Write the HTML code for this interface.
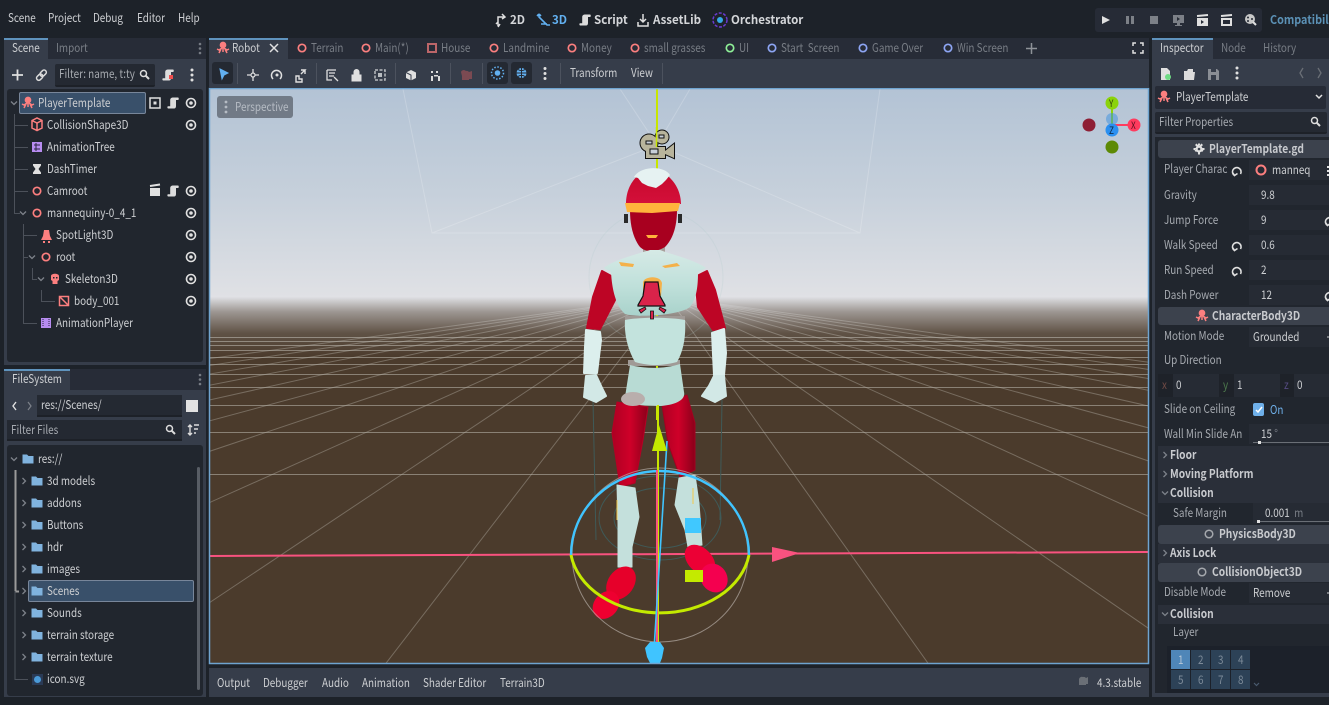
<!DOCTYPE html>
<html><head><meta charset="utf-8"><style>
html,body{margin:0;padding:0;width:1329px;height:705px;overflow:hidden;background:#1d2229}
body{position:relative;font-family:"Noto Sans CJK JP","Liberation Sans",sans-serif;font-size:12px;color:#cdcfd2}
.b{position:absolute}
.t{position:absolute;white-space:nowrap;line-height:16px;transform:scaleX(.825);transform-origin:0 50%}
.d{color:#787d85}
.l{color:#a6aab0}
.h{font-weight:700;color:#d4d6d9;transform:scaleX(.96)}
.s{font-weight:700;color:#c8cace;transform:scaleX(.85)}
svg{position:absolute;left:0;top:0}
</style></head><body>

<svg width="1329" height="705" viewBox="0 0 1329 705">
<defs>
<linearGradient id="sky" x1="0" y1="0" x2="0" y2="1"><stop offset="0" stop-color="#b3c3d5"/><stop offset=".5" stop-color="#c6d0db"/><stop offset="1" stop-color="#e0e1e5"/></linearGradient>
<linearGradient id="fog" x1="0" y1="0" x2="0" y2="1"><stop offset="0" stop-color="#dfe0e4"/><stop offset=".25" stop-color="#dfe0e4" stop-opacity=".55"/><stop offset=".6" stop-color="#dfe0e4" stop-opacity=".14"/><stop offset="1" stop-color="#dfe0e4" stop-opacity="0"/></linearGradient>
<linearGradient id="chest" x1="0" y1="0" x2="0" y2="1"><stop offset="0" stop-color="#d6eae6"/><stop offset=".55" stop-color="#bfe0da"/><stop offset="1" stop-color="#a9d2cb"/></linearGradient>
<linearGradient id="leg" x1="0" y1="0" x2="1" y2="0"><stop offset="0" stop-color="#ad0022"/><stop offset=".5" stop-color="#cf0029"/><stop offset="1" stop-color="#8a001a"/></linearGradient>
<linearGradient id="helm" x1="0" y1="0" x2="0" y2="1"><stop offset="0" stop-color="#c5082b"/><stop offset="1" stop-color="#d4103a"/></linearGradient>
<clipPath id="vp"><rect x="210" y="89" width="938" height="574"/></clipPath>
</defs>
<g clip-path="url(#vp)">
<rect x="210" y="89" width="938" height="209" fill="url(#sky)"/>
<rect x="210" y="297" width="938" height="367" fill="#4b3b2c"/>
<g stroke="#b4b0a6" stroke-opacity=".6" stroke-width="1" fill="none">
<path d="M210,474.500H1148M210,432.500H1148M210,405.500H1148M210,387.500H1148M210,374.500H1148M210,364.500H1148M210,357.500H1148M210,350.500H1148M210,345.500H1148M210,341.500H1148M210,337.500H1148"/>
</g>
<g stroke="#b4b0a6" stroke-opacity=".42" stroke-width="1" fill="none">
<path d="M668,297L360,697M668,297L68,697M668,297L-224,697M668,297L-520,697M668,297L-812,697M668,297L-1112,697M668,297L-1412,697M668,297L-1712,697M668,297L-2012,697M668,297L-2312,697"/>
<path d="M668,297L952,697M668,297L1248,697M668,297L1544,697M668,297L1840,697M668,297L2136,697M668,297L2432,697M668,297L2728,697M668,297L3024,697M668,297L3320,697M668,297L3616,697"/>
</g>
<rect x="210" y="297" width="938" height="60" fill="url(#fog)"/>
<!-- camera frustum -->
<g stroke="#fff" stroke-opacity=".2" fill="none">
<path d="M403,89L432,233H860L880,89M432,233L657,145L860,233M657,145L620,89M657,145L690,89"/>
</g>
<!-- Y axis & X axis behind model -->
<path d="M657,89V420" stroke="#c8e600" stroke-width="2"/>
<path d="M210,556L1148,552" stroke="#f9527f" stroke-width="2"/>
<!-- capsule thin -->
<g fill="none" stroke="#3f5a58" stroke-width="1">
<circle cx="656" cy="277" r="67" stroke="#a8c8c8" stroke-opacity=".2"/>
<path d="M593,400L596,540M722,400L720,520"/>
<ellipse cx="660" cy="518" rx="61" ry="42"/>
<ellipse cx="660" cy="518" rx="46" ry="30"/>
</g>
<!-- head -->
<path d="M624,214h4v9h-4zM678,214h4v9h-4z" fill="#2a2a2a"/>
<path d="M643,244h22v12h-22z" fill="#a8a09c"/>
<path d="M630,210L677,210C677,228 672,240 665,247C655,253 645,252 640,247C633,238 630,225 630,210Z" fill="#a8001f"/>
<path d="M626,204C626,188 634,178 640,174C645,168 660,167 665,174C673,179 681,190 681,204Z" fill="url(#helm)"/>
<path d="M634,177C640,166 664,165 670,175L666,180L662,184L656,188L648,186L642,183L638,178Z" fill="#e6f2f2"/>
<path d="M625,203L680,203L678,211L652,213L627,212Z" fill="#ffb43c"/>
<path d="M646,235h12l-2,3h-8z" fill="#ffb43c"/>
<!-- arms -->
<path d="M602,271L613,277L615,300L600,329L587,328L593,297Z" fill="#bd0525" stroke="#bd0525" stroke-width="2" stroke-linejoin="round"/>
<path d="M695,277L707,271L715,290L725,328L713,330L698,307Z" fill="#bd0525" stroke="#bd0525" stroke-width="2" stroke-linejoin="round"/>
<path d="M586,330L600,332L601,340L597,373L584,373L585,347Z" fill="#dcefed" stroke="#dcefed" stroke-width="2" stroke-linejoin="round"/>
<path d="M712,333L724,329L726,353L724,375L714,375Z" fill="#dcefed" stroke="#dcefed" stroke-width="2" stroke-linejoin="round"/>
<path d="M586,376L596,375L602,388L606,396L596,402L584,397Z" fill="#d2e8e6" stroke="#d2e8e6" stroke-width="2" stroke-linejoin="round"/>
<path d="M714,376L724,376L726,396L715,402L702,396L709,386Z" fill="#d2e8e6" stroke="#d2e8e6" stroke-width="2" stroke-linejoin="round"/>
<!-- torso -->
<path d="M625,316h60v6h-60zM628,360h52v6h-52z" fill="#a09a96"/>
<path d="M604,268C610,262 630,256 640,253L650,250H660C670,254 695,260 706,268L698,272C698,285 697,298 690,307C680,315 640,318 625,314C616,306 612,290 611,272Z" fill="url(#chest)"/>
<path d="M619,262l15,2l-1,3l-12,-1zM662,266l15,-3l3,3l-15,2z" fill="#f4b14a"/>
<path d="M643,282C645,276 660,275 662,283L661,296H643Z" fill="#f4b14a"/>
<path d="M625,320C640,317 670,317 685,320C686,335 684,350 677,362C660,366 650,366 635,362C628,350 624,335 625,320Z" fill="#c3e3dd"/>
<!-- legs -->
<path d="M617,402L648,407L643,440L635,483L620,487L612,433Z" fill="url(#leg)" stroke="#b50024" stroke-width="1" stroke-linejoin="round"/>
<path d="M662,405L687,395L695,423L695,470L680,477L668,443Z" fill="url(#leg)" stroke="#a3001f" stroke-width="1" stroke-linejoin="round"/>
<path d="M630,365C645,369 665,369 680,364L684,392C686,400 675,405 660,406L640,405L625,397Z" fill="#b8dbd4"/>
<ellipse cx="633" cy="399" rx="12" ry="7" fill="#b9aeac"/>
<path d="M617,485L635,488L639,517L632,547L632,567L618,567L618,523Z" fill="#c4e0dc" stroke="#c4e0dc" stroke-linejoin="round"/>
<path d="M679,478L695,475L699,503L702,545L688,547L685,530L675,505Z" fill="#c4e0dc" stroke="#c4e0dc" stroke-linejoin="round"/>
<ellipse cx="621" cy="583" rx="13" ry="18" transform="rotate(35 621 583)" fill="#e6002a"/>
<ellipse cx="606" cy="605" rx="12" ry="15" transform="rotate(40 606 605)" fill="#ee0030"/>
<ellipse cx="700" cy="560" rx="12" ry="18" transform="rotate(-45 700 560)" fill="#ec0035"/>
<ellipse cx="714" cy="578" rx="13" ry="15" transform="rotate(-35 714 578)" fill="#f4004f"/>
<path d="M617,500v20M693,488v16" stroke="#f2c94c" stroke-width="1" fill="none"/>
<!-- gizmos -->
<ellipse cx="660" cy="555" rx="88" ry="87" fill="none" stroke="#b5ada5" stroke-opacity=".7" stroke-width="1"/>
<path d="M571,555A89,84 0 0 1 749,555" fill="none" stroke="#40c4ff" stroke-width="2.400"/>
<path d="M571,555A90,68 0 0 0 749,555" fill="none" stroke="#c4ea00" stroke-width="3"/>
<path d="M658,405V662" stroke="#c8e600" stroke-width="2"/>
<path d="M657,470V660" stroke="#f9527f" stroke-width="2"/>
<path d="M667,441L654,650" stroke="#40c4ff" stroke-width="1.600"/>
<path d="M659,425L652,451H667Z" fill="#c4ea00"/>
<path d="M772,547L800,553L772,562Z" fill="#f9527f"/>
<path d="M685,518h16v15h-16z" fill="#40c8ff"/>
<path d="M685,570h18v12h-18z" fill="#c4ea00"/>
<path d="M650,642h10l4,6l-2,10l-2,5h-10l-3,-6l-2,-9z" fill="#40c4ff"/>
<!-- spotlight gizmo -->
<path d="M645,282H658L660,296L665,305V306H638V305L643,296Z" fill="#d9234a" stroke="#111" stroke-width="1.200"/>
<path d="M639,310l6,-3l1,2l-5,4zM666,310l-6,-3l-1,2l5,4zM650.500,311h3v8h-3z" fill="#d9234a" stroke="#111" stroke-width=".8"/>
<!-- camera gizmo -->
<g fill="#b8b49c" stroke="#111" stroke-width="2">
<circle cx="649" cy="143" r="8.500"/><circle cx="662" cy="137" r="6.500"/><rect x="646" y="147" width="19" height="11"/><path d="M665,151L674,144V158L665,154Z"/>
</g>
<g fill="#b8b49c"><circle cx="649" cy="143" r="8.500"/><circle cx="662" cy="137" r="6.500"/><rect x="646" y="147" width="19" height="11"/><path d="M665,151L674,144V158L665,154Z"/></g>
<path d="M646,141h6v3h-6zM659,135h5v3h-5zM650,149h8v5h-8z" fill="#c8cfd8" stroke="#111" stroke-width="1"/>
<path d="M656.500,127v20" stroke="#c8e600" stroke-width="1.500"/>
<!-- view gizmo -->
<path d="M1112,130V103" stroke="#8bd30a" stroke-width="2"/>
<path d="M1112,125H1134" stroke="#ff3b5e" stroke-width="2"/>
<circle cx="1112" cy="119" r="6" fill="#3a8fe0" fill-opacity=".5"/>
<circle cx="1089" cy="125" r="6.500" fill="#8e1f35"/>
<circle cx="1112" cy="147" r="6.500" fill="#5d8a05"/>
<circle cx="1112" cy="103" r="6.500" fill="#8bd30a"/>
<circle cx="1134" cy="125" r="6.500" fill="#ff3b5e"/>
<circle cx="1112" cy="130" r="6.500" fill="#2a8ff0"/>
</g>
<rect x="209.500" y="88.500" width="939" height="575" fill="none" stroke="#6fa4d0" stroke-width="1.500"/>
</svg>

<!-- panels -->
<div class="b" style="left:4px;top:38px;width:202px;height:327px;background:#363d4a"></div>
<div class="b" style="left:4px;top:38px;width:202px;height:21px;background:#272c37"></div>
<div class="b" style="left:4px;top:38px;width:44px;height:21px;background:#363d4a;border-top:2px solid #5f93bd;box-sizing:border-box"></div>
<div class="b" style="left:7px;top:89px;width:196px;height:273px;background:#21262e;border-radius:3px"></div>
<div class="b" style="left:19px;top:92px;width:127px;height:22px;background:#39506a;border:1px solid #78869a;border-radius:2px;box-sizing:border-box"></div>
<div class="b" style="left:55px;top:64px;width:100px;height:23px;background:#242932;border-bottom:2px solid #1d2128;box-sizing:border-box;border-radius:2px"></div>

<div class="b" style="left:4px;top:369px;width:202px;height:328px;background:#363d4a"></div>
<div class="b" style="left:4px;top:369px;width:202px;height:21px;background:#272c37"></div>
<div class="b" style="left:4px;top:369px;width:66px;height:21px;background:#363d4a;border-top:2px solid #5f93bd;box-sizing:border-box"></div>
<div class="b" style="left:37px;top:395px;width:145px;height:22px;background:#242932;border-bottom:2px solid #1d2128;box-sizing:border-box"></div>
<div class="b" style="left:186px;top:400px;width:12px;height:12px;background:#e2e2e2"></div>
<div class="b" style="left:7px;top:420px;width:175px;height:21px;background:#242932;border-bottom:2px solid #1d2128;box-sizing:border-box"></div>
<div class="b" style="left:7px;top:445px;width:196px;height:251px;background:#21262e;border-radius:3px"></div>
<div class="b" style="left:28px;top:580px;width:166px;height:22px;background:#39506a;border:1px solid #78869a;border-radius:2px;box-sizing:border-box"></div>
<div class="b" style="left:197px;top:467px;width:3px;height:223px;background:#585d65;border-radius:2px"></div>

<div class="b" style="left:209px;top:38px;width:940px;height:21px;background:#272c37"></div>
<div class="b" style="left:209px;top:38px;width:79px;height:21px;background:#363d4a;border-top:2px solid #5f93bd;box-sizing:border-box"></div>
<div class="b" style="left:209px;top:59px;width:940px;height:29px;background:#363d4a"></div>
<div class="b" style="left:212px;top:62px;width:21px;height:22px;background:#242932;border-radius:3px"></div>
<div class="b" style="left:487px;top:62px;width:21px;height:22px;background:#242932;border-radius:3px"></div>
<div class="b" style="left:511px;top:62px;width:21px;height:22px;background:#242932;border-radius:3px"></div>
<div class="b" style="left:209px;top:668px;width:940px;height:29px;background:#363d4a"></div>
<div class="b" style="left:217px;top:96px;width:76px;height:22px;background:#717a86;border-radius:3px"></div>

<div class="b" style="left:1095px;top:8px;width:167px;height:24px;background:#262b36;border-radius:3px"></div>

<div class="b" style="left:1152px;top:38px;width:177px;height:659px;background:#363d4a"></div>
<div class="b" style="left:1152px;top:38px;width:177px;height:21px;background:#272c37"></div>
<div class="b" style="left:1152px;top:38px;width:61px;height:21px;background:#363d4a;border-top:2px solid #5f93bd;box-sizing:border-box"></div>
<div class="b" style="left:1155px;top:86px;width:171px;height:23px;background:#262b36;border-radius:2px"></div>
<div class="b" style="left:1155px;top:112px;width:172px;height:22px;background:#242932;border-bottom:2px solid #1d2128;box-sizing:border-box;border-radius:2px"></div>
<div class="b" style="left:1155px;top:137px;width:174px;height:556px;background:#21262e"></div>
<div class="b" style="left:1158px;top:140px;width:171px;height:18px;background:#3c424d;border-radius:3px 0 0 3px"></div>
<div class="b" style="left:1158px;top:307px;width:171px;height:18px;background:#3c424d;border-radius:3px 0 0 3px"></div>
<div class="b" style="left:1158px;top:525px;width:171px;height:19px;background:#3c424d;border-radius:3px 0 0 3px"></div>
<div class="b" style="left:1158px;top:563px;width:171px;height:19px;background:#3c424d;border-radius:3px 0 0 3px"></div>
<div class="b" style="left:1158px;top:446px;width:171px;height:57px;background:#2a2f39"></div>
<div class="b" style="left:1158px;top:544px;width:171px;height:19px;background:#2a2f39"></div>
<div class="b" style="left:1158px;top:605px;width:171px;height:19px;background:#2a2f39"></div>
<div class="b" style="left:1249px;top:160px;width:80px;height:20px;background:#262b34"></div>
<div class="b" style="left:1249px;top:185px;width:80px;height:20px;background:#262b34"></div>
<div class="b" style="left:1249px;top:210px;width:80px;height:20px;background:#262b34"></div>
<div class="b" style="left:1249px;top:235px;width:80px;height:20px;background:#262b34"></div>
<div class="b" style="left:1249px;top:260px;width:80px;height:20px;background:#262b34"></div>
<div class="b" style="left:1249px;top:285px;width:80px;height:20px;background:#262b34"></div>
<div class="b" style="left:1249px;top:327px;width:80px;height:20px;background:#262b34"></div>
<div class="b" style="left:1158px;top:374px;width:171px;height:23px;background:#262b34"></div>
<div class="b" style="left:1158px;top:374px;width:15px;height:23px;background:#1e2229"></div>
<div class="b" style="left:1219px;top:374px;width:15px;height:23px;background:#1e2229"></div>
<div class="b" style="left:1280px;top:374px;width:14px;height:23px;background:#1e2229"></div>
<div class="b" style="left:1249px;top:424px;width:80px;height:20px;background:#262b34"></div>
<div class="b" style="left:1253px;top:442px;width:76px;height:1px;background:#6a6f76"></div>
<div class="b" style="left:1258px;top:441px;width:3px;height:3px;background:#e0e0e0"></div>
<div class="b" style="left:1253px;top:503px;width:76px;height:20px;background:#262b34"></div>
<div class="b" style="left:1258px;top:521px;width:71px;height:1px;background:#6a6f76"></div>
<div class="b" style="left:1257px;top:520px;width:3px;height:3px;background:#e0e0e0"></div>
<div class="b" style="left:1249px;top:583px;width:80px;height:20px;background:#262b34"></div>
<div class="b" style="left:1167px;top:646px;width:162px;height:47px;background:#1c212a"></div>
<div class="b" style="left:1171px;top:650px;width:19px;height:19px;background:#4f86b8"></div>
<div class="b" style="left:1191px;top:650px;width:19px;height:19px;background:#2d4257"></div>
<div class="b" style="left:1211px;top:650px;width:19px;height:19px;background:#2d4257"></div>
<div class="b" style="left:1231px;top:650px;width:19px;height:19px;background:#2d4257"></div>
<div class="b" style="left:1171px;top:670px;width:19px;height:19px;background:#2d4257"></div>
<div class="b" style="left:1191px;top:670px;width:19px;height:19px;background:#2d4257"></div>
<div class="b" style="left:1211px;top:670px;width:19px;height:19px;background:#2d4257"></div>
<div class="b" style="left:1231px;top:670px;width:19px;height:19px;background:#2d4257"></div>
<div class="b" style="left:1253px;top:403px;width:11px;height:13px;background:#6fb0ea;border-radius:2px"></div>

<!-- text: menu -->
<span class="t" style="left:8px;top:10px">Scene</span>
<span class="t" style="left:48px;top:10px">Project</span>
<span class="t" style="left:93px;top:10px">Debug</span>
<span class="t" style="left:137px;top:10px">Editor</span>
<span class="t" style="left:178px;top:10px">Help</span>
<span class="t h" style="left:510px;top:12px">2D</span>
<span class="t h" style="left:552px;top:12px;color:#62b0f0">3D</span>
<span class="t h" style="left:594px;top:12px">Script</span>
<span class="t h" style="left:653px;top:12px">AssetLib</span>
<span class="t h" style="left:731px;top:12px">Orchestrator</span>
<span class="t h" style="left:1270px;top:12px;color:#5b91b5;transform:scaleX(.9)">Compatibility</span>

<span class="t" style="left:12px;top:40px">Scene</span>
<span class="t d" style="left:56px;top:40px">Import</span>
<span class="t l" style="left:59px;top:66px">Filter: name, t:ty</span>
<span class="t" style="left:38px;top:95px">PlayerTemplate</span>
<span class="t" style="left:47px;top:117px">CollisionShape3D</span>
<span class="t" style="left:47px;top:139px">AnimationTree</span>
<span class="t" style="left:47px;top:161px">DashTimer</span>
<span class="t" style="left:47px;top:183px">Camroot</span>
<span class="t" style="left:47px;top:205px">mannequiny-0_4_1</span>
<span class="t" style="left:56px;top:227px">SpotLight3D</span>
<span class="t" style="left:56px;top:249px">root</span>
<span class="t" style="left:65px;top:271px">Skeleton3D</span>
<span class="t" style="left:74px;top:293px">body_001</span>
<span class="t" style="left:56px;top:315px">AnimationPlayer</span>

<span class="t" style="left:12px;top:371px">FileSystem</span>
<span class="t" style="left:41px;top:397px">res://Scenes/</span>
<span class="t l" style="left:11px;top:422px">Filter Files</span>
<span class="t" style="left:38px;top:451px">res://</span>
<span class="t" style="left:47px;top:473px">3d models</span>
<span class="t" style="left:47px;top:495px">addons</span>
<span class="t" style="left:47px;top:517px">Buttons</span>
<span class="t" style="left:47px;top:539px">hdr</span>
<span class="t" style="left:47px;top:561px">images</span>
<span class="t" style="left:47px;top:583px">Scenes</span>
<span class="t" style="left:47px;top:605px">Sounds</span>
<span class="t" style="left:47px;top:627px">terrain storage</span>
<span class="t" style="left:47px;top:649px">terrain texture</span>
<span class="t" style="left:47px;top:671px">icon.svg</span>

<span class="t" style="left:232px;top:40px">Robot</span>
<span class="t d" style="left:311px;top:40px">Terrain</span>
<span class="t d" style="left:375px;top:40px">Main(*)</span>
<span class="t d" style="left:441px;top:40px">House</span>
<span class="t d" style="left:503px;top:40px">Landmine</span>
<span class="t d" style="left:581px;top:40px">Money</span>
<span class="t d" style="left:644px;top:40px">small grasses</span>
<span class="t d" style="left:739px;top:40px">UI</span>
<span class="t d" style="left:781px;top:40px">Start&nbsp; Screen</span>
<span class="t d" style="left:872px;top:40px">Game Over</span>
<span class="t d" style="left:957px;top:40px">Win Screen</span>
<span class="t" style="left:570px;top:65px">Transform</span>
<span class="t" style="left:631px;top:65px">View</span>
<span class="t" style="left:235px;top:99px;color:#b6bcc4">Perspective</span>

<span class="t" style="left:1109px;top:95px;color:#33420a;font-size:10px">Y</span>
<span class="t" style="left:1109px;top:122px;color:#0d2038;font-size:10px">Z</span>
<span class="t" style="left:1131px;top:117px;color:#5a1020;font-size:10px">X</span>

<span class="t" style="left:217px;top:675px">Output</span>
<span class="t" style="left:263px;top:675px">Debugger</span>
<span class="t" style="left:322px;top:675px">Audio</span>
<span class="t" style="left:362px;top:675px">Animation</span>
<span class="t" style="left:423px;top:675px">Shader Editor</span>
<span class="t" style="left:500px;top:675px">Terrain3D</span>
<span class="t" style="left:1097px;top:675px">4.3.stable</span>

<span class="t" style="left:1160px;top:40px">Inspector</span>
<span class="t d" style="left:1221px;top:40px">Node</span>
<span class="t d" style="left:1263px;top:40px">History</span>
<span class="t" style="left:1176px;top:89px">PlayerTemplate</span>
<span class="t l" style="left:1159px;top:114px">Filter Properties</span>
<span class="t s" style="left:1209px;top:141px">PlayerTemplate.gd</span>
<span class="t l" style="left:1164px;top:161px">Player Charac</span>
<span class="t" style="left:1272px;top:162px">manneq</span>
<span class="t l" style="left:1164px;top:187px">Gravity</span>
<span class="t" style="left:1261px;top:187px">9.8</span>
<span class="t l" style="left:1164px;top:212px">Jump Force</span>
<span class="t" style="left:1261px;top:212px">9</span>
<span class="t l" style="left:1164px;top:237px">Walk Speed</span>
<span class="t" style="left:1261px;top:237px">0.6</span>
<span class="t l" style="left:1164px;top:262px">Run Speed</span>
<span class="t" style="left:1261px;top:262px">2</span>
<span class="t l" style="left:1164px;top:287px">Dash Power</span>
<span class="t" style="left:1261px;top:287px">12</span>
<span class="t s" style="left:1212px;top:308px">CharacterBody3D</span>
<span class="t l" style="left:1164px;top:328px">Motion Mode</span>
<span class="t" style="left:1253px;top:329px">Grounded</span>
<span class="t l" style="left:1164px;top:352px">Up Direction</span>
<span class="t" style="left:1162px;top:377px;color:#6f4a45">x</span>
<span class="t" style="left:1176px;top:377px">0</span>
<span class="t" style="left:1223px;top:377px;color:#4d7a4d">y</span>
<span class="t" style="left:1237px;top:377px">1</span>
<span class="t" style="left:1284px;top:377px;color:#544a80">z</span>
<span class="t" style="left:1297px;top:377px">0</span>
<span class="t l" style="left:1164px;top:401px">Slide on Ceiling</span>
<span class="t" style="left:1270px;top:402px;color:#6fb0ea">On</span>
<span class="t l" style="left:1164px;top:426px">Wall Min Slide An</span>
<span class="t" style="left:1261px;top:426px">15<span style="color:#777c84"> °</span></span>
<span class="t s" style="left:1170px;top:447px">Floor</span>
<span class="t s" style="left:1170px;top:466px">Moving Platform</span>
<span class="t s" style="left:1170px;top:485px">Collision</span>
<span class="t l" style="left:1173px;top:505px">Safe Margin</span>
<span class="t" style="left:1265px;top:505px">0.001 <span style="color:#777c84">&nbsp;m</span></span>
<span class="t s" style="left:1219px;top:526px">PhysicsBody3D</span>
<span class="t s" style="left:1170px;top:545px">Axis Lock</span>
<span class="t s" style="left:1212px;top:564px">CollisionObject3D</span>
<span class="t l" style="left:1164px;top:584px">Disable Mode</span>
<span class="t" style="left:1253px;top:585px">Remove</span>
<span class="t s" style="left:1170px;top:606px">Collision</span>
<span class="t l" style="left:1173px;top:624px">Layer</span>
<span class="t" style="left:1178px;top:652px;color:#b8c8d8">1</span>
<span class="t l" style="left:1198px;top:652px;color:#7c8a98">2</span>
<span class="t l" style="left:1218px;top:652px;color:#7c8a98">3</span>
<span class="t l" style="left:1238px;top:652px;color:#7c8a98">4</span>
<span class="t l" style="left:1178px;top:672px;color:#7c8a98">5</span>
<span class="t l" style="left:1198px;top:672px;color:#7c8a98">6</span>
<span class="t l" style="left:1218px;top:672px;color:#7c8a98">7</span>
<span class="t l" style="left:1238px;top:672px;color:#7c8a98">8</span>

<!-- icons overlay -->
<svg width="1329" height="705" viewBox="0 0 1329 705">
<defs>
<g id="eye"><circle r="4.500" fill="none" stroke="#e0e0e0" stroke-width="1.600"/><circle r="1.800" fill="#e0e0e0"/></g>
<circle id="rr" r="3.700" fill="none" stroke="#fc7f7f" stroke-width="1.700"/>
<circle id="rg" r="3.700" fill="none" stroke="#8eef97" stroke-width="1.700"/>
<circle id="rb" r="3.700" fill="none" stroke="#8da5f3" stroke-width="1.700"/>
<path id="sc" d="M-3,5.500H-4.500C-5.800,5.500 -6,3.500 -5,3.200H-2.800V-3C-2.800,-5 -1,-5.500 0,-5.500H5C6,-5.500 6,-3 5,-3H3V3C3,5 2,5.500 1,5.500Z" fill="#dcdcdc"/>
<path id="fo" d="M-5.500,-4.500H-1L.5,-3H5.500V4.500H-5.500Z" fill="#80b3de"/>
<path id="cr" d="M-1.500,-3L1.500,0L-1.500,3" fill="none" stroke="#7d828a" stroke-width="1.300"/>
<path id="cd" d="M-3,-1.500L0,1.500L3,-1.500" fill="none" stroke="#7d828a" stroke-width="1.300"/>
<g id="se"><circle cx="-1.500" cy="-1.500" r="3" fill="none" stroke="#dcdcdc" stroke-width="1.500"/><path d="M.8,.8L4,4" stroke="#dcdcdc" stroke-width="2"/></g>
<g id="oc" fill="none" stroke="#fc7f7f" stroke-width="1.500"><circle cy="-3" r="2.600" fill="#fc7f7f"/><path d="M0,0V4M-1,0L-4,2L-6,1M1,0L4,2L6,1M-2,1L-4,5M2,1L4,5"/></g>
<g id="dt" fill="#e0e0e0"><circle cy="-5" r="1.500"/><circle r="1.500"/><circle cy="5" r="1.500"/></g>
<path id="rv" d="M-2.500,4.500A4.300,4.300 0 1 1 3.500,3M-4.700,1.200L-2.500,4.500L.5,2.500" fill="none" stroke="#e0e0e0" stroke-width="1.600"/>
</defs>

<!-- scene dock -->
<g fill="#777c84"><circle cx="200" cy="44" r="1.300"/><circle cx="200" cy="48.500" r="1.300"/><circle cx="200" cy="53" r="1.300"/><circle cx="200" cy="375" r="1.300"/><circle cx="200" cy="379.500" r="1.300"/><circle cx="200" cy="384" r="1.300"/></g>
<path d="M12,75H23M17.500,69.500V80.500" stroke="#e0e0e0" stroke-width="1.800"/>
<g fill="none" stroke="#dcdcdc" stroke-width="1.500"><rect x="36" y="75" width="7" height="4.500" rx="2.200" transform="rotate(-45 39.500 77)"/><rect x="39.500" y="71" width="7" height="4.500" rx="2.200" transform="rotate(-45 43 73)"/></g>
<use href="#se" x="145" y="75"/>
<use href="#sc" x="168" y="75"/><rect x="169" y="75" width="4" height="4" fill="#f05050"/>
<use href="#dt" x="192" y="75"/>
<use href="#cd" x="14" y="103"/>
<use href="#oc" x="28" y="103"/>
<rect x="150" y="98" width="10" height="10" fill="none" stroke="#e0e0e0" stroke-width="1.500"/><rect x="153.500" y="101.500" width="3" height="3" fill="#e0e0e0"/>
<use href="#sc" x="173" y="103"/>
<use href="#eye" x="191" y="103"/>
<g fill="none" stroke="#4c515a" stroke-width="1">
<path d="M14.500,114V213.500H20M14.500,125.500H28M14.500,147.500H28M14.500,169.500H28M14.500,191.500H28"/>
<path d="M23.500,224V323.500H37M23.500,235.500H37M23.500,257.500H28"/>
<path d="M32.500,268V279.500H37M41.500,290V301.500H55"/>
</g>
<path d="M32,120.500L37,118L42,120.500V128L37,130.500L32,128ZM32,120.500L37,123L42,120.500M37,123V130" fill="none" stroke="#fc7f7f" stroke-width="1.500"/>
<rect x="32" y="142" width="10" height="10" fill="#b78cf0"/><path d="M34,145h6M34,149h6M36,143v8" stroke="#2a2540" stroke-width="1"/>
<path d="M33,164H41V165.500L38.500,169L41,172.500V174H33V172.500L35.500,169L33,165.500Z" fill="#e0e0e0"/>
<use href="#rr" x="37" y="191"/>
<rect x="150" y="188" width="10" height="8" fill="#e0e0e0"/><path d="M150,186L160,184.500" stroke="#e0e0e0" stroke-width="2"/>
<use href="#sc" x="173" y="191"/>
<use href="#eye" x="191" y="125"/><use href="#eye" x="191" y="191"/><use href="#eye" x="191" y="213"/><use href="#eye" x="191" y="235"/><use href="#eye" x="191" y="257"/><use href="#eye" x="191" y="279"/><use href="#eye" x="191" y="301"/>
<use href="#cd" x="23" y="213"/><use href="#rr" x="37" y="213"/>
<path d="M44,230H49L50,236L52,240H41L43,236ZM43,241h2v2h-2zM48,241h2v2h-2z" fill="#fc7f7f"/>
<use href="#cd" x="32" y="257"/><use href="#rr" x="46" y="257"/>
<use href="#cd" x="41" y="279"/>
<path d="M51,276C51,273 59,273 59,276V280L57.500,281V284H52.500V281L51,280Z" fill="#fc7f7f"/><rect x="53" y="277" width="1.500" height="1.500" fill="#21262e"/><rect x="56" y="277" width="1.500" height="1.500" fill="#21262e"/>
<path d="M59.500,296.500H68.500V305.500H59.500ZM59.500,296.500L68.500,305.500" fill="none" stroke="#fc7f7f" stroke-width="1.500"/>
<rect x="41" y="318" width="10" height="10" fill="#b78cf0"/><path d="M43,319v8M49,319v8" stroke="#2a2540" stroke-width="1" stroke-dasharray="1 1"/>

<!-- filesystem -->
<path d="M16,402L13,406L16,410" fill="none" stroke="#e0e0e0" stroke-width="1.400"/>
<path d="M28,402L31,406L28,410" fill="none" stroke="#7d828a" stroke-width="1.200"/>
<use href="#se" x="171" y="430"/>
<path d="M190,425V435M188,427L190,425L192,427M188,433L190,435L192,433M194,425H199M194,429H198M194,433H196" fill="none" stroke="#dcdcdc" stroke-width="1.400"/>
<use href="#cd" x="14" y="459"/><use href="#fo" x="28" y="459"/>
<path d="M15.500,470V591.500H19" fill="none" stroke="#9a9a9a" stroke-width="2"/>
<path d="M15,591V679.500H28" fill="none" stroke="#4c515a"/>
<g><use href="#cr" x="24" y="481"/><use href="#cr" x="24" y="503"/><use href="#cr" x="24" y="525"/><use href="#cr" x="24" y="547"/><use href="#cr" x="24" y="569"/><use href="#cr" x="24" y="591"/><use href="#cr" x="24" y="613"/><use href="#cr" x="24" y="635"/><use href="#cr" x="24" y="657"/></g>
<use href="#fo" x="37" y="481"/><use href="#fo" x="37" y="503"/><use href="#fo" x="37" y="525"/><use href="#fo" x="37" y="547"/><use href="#fo" x="37" y="569"/><use href="#fo" x="37" y="591"/><use href="#fo" x="37" y="613"/><use href="#fo" x="37" y="635"/><use href="#fo" x="37" y="657"/>
<rect x="32" y="674" width="11" height="11" fill="#2a3a55"/><circle cx="37.500" cy="679.500" r="3.500" fill="#4a9ad8"/>

<!-- tabs -->
<use href="#oc" x="223" y="48"/>
<path d="M270,44L278,52M278,44L270,52" stroke="#e0e0e0" stroke-width="1.500"/>
<use href="#rr" x="302" y="48"/><use href="#rr" x="366" y="48"/><use href="#rr" x="494" y="48"/><use href="#rr" x="572" y="48"/><use href="#rr" x="635" y="48"/>
<rect x="428" y="44" width="8" height="8" fill="none" stroke="#fc7f7f" stroke-opacity=".7" stroke-width="2"/>
<use href="#rg" x="730" y="48"/><use href="#rb" x="772" y="48"/><use href="#rb" x="863" y="48"/><use href="#rb" x="948" y="48"/>
<path d="M1026,48.500H1037M1031.500,43V54" stroke="#8e9298" stroke-width="1.500"/>
<path d="M1133,46V43H1136M1140,43H1143V46M1143,50V53H1140M1136,53H1133V50" fill="none" stroke="#e0e0e0" stroke-width="1.500"/>

<!-- top center icons -->
<path d="M498,26V17H504M498,22L496,24M498,27L500,24M502,14L505,17L502,19" fill="none" stroke="#e0e0e0" stroke-width="1.500"/>
<path d="M539,14V17L547,25H550M539,14L537,16M539,14L541,16M541,24H547M550,25" fill="none" stroke="#62b0f0" stroke-width="1.600"/>
<use href="#sc" x="585" y="20"/>
<path d="M643,14V22M640,19L643,22L646,19M638,22V26H648V22" fill="none" stroke="#e0e0e0" stroke-width="1.500"/>
<circle cx="720" cy="20" r="7" fill="none" stroke="#6a3ad0" stroke-width="1.500" stroke-dasharray="3 1.500"/><circle cx="720" cy="20" r="3" fill="#35a8e8"/>

<!-- scene toolbar center -->
<path d="M220,69L228,73L224,75L222,79Z" fill="#62b0f0" stroke="#62b0f0"/>
<line x1="237.500" y1="63" x2="237.500" y2="84" stroke="#4c525e"/>
<path d="M253,69V81M247,75H259" stroke="#e0e0e0" stroke-width="1.300"/><circle cx="253" cy="75" r="2" fill="#363d4a" stroke="#e0e0e0" stroke-width="1.200"/>
<path d="M273,79A5,5 0 1 1 280,79" fill="none" stroke="#e0e0e0" stroke-width="1.500"/><circle cx="277" cy="75" r="1.500" fill="#e0e0e0"/>
<path d="M296,80V76H299V79H302V82H296ZM301,74L305,70H301M305,70V74" fill="none" stroke="#e0e0e0" stroke-width="1.400"/>
<line x1="316.500" y1="63" x2="316.500" y2="84" stroke="#4c525e"/>
<path d="M327,70H336M327,70V80H332M329,73H335M329,76H334M334,77L338,81" fill="none" stroke="#e0e0e0" stroke-width="1.300"/>
<path d="M352,75H361V81H352ZM354,75V72A2.500,2.500 0 0 1 359,72V75" fill="#e0e0e0" stroke="#e0e0e0"/>
<path d="M375,70H385V80H375Z" fill="none" stroke="#b8bcc0" stroke-width="1.500" stroke-dasharray="3 1.500"/><rect x="378" y="73" width="4" height="4" fill="#b8bcc0"/>
<line x1="395.500" y1="63" x2="395.500" y2="84" stroke="#4c525e"/>
<path d="M411,70L416,72.500V78L411,80.500L406,78V72.500Z" fill="#e0e0e0"/><path d="M406,72.500L411,75V80.500" fill="none" stroke="#363d4a"/>
<path d="M431,71h2v2h-2zM436,71h2v2h-2zM431,76h2v5h-2zM438,76h2v5h-2zM434,75h4v1.500h-4z" fill="#dcdcdc"/>
<line x1="450.500" y1="63" x2="450.500" y2="84" stroke="#4c525e"/>
<path d="M461,72a3,3 0 0 1 5,-1a3,3 0 0 1 3,1l3,-1v8h-3v1h-7v-4z" fill="#7b4a52"/>
<line x1="482.500" y1="63" x2="482.500" y2="84" stroke="#4c525e"/>
<circle cx="497.500" cy="73" r="2.800" fill="#62b0f0"/><circle cx="497.500" cy="73" r="6" fill="none" stroke="#62b0f0" stroke-width="1.500" stroke-dasharray="1.500 1.600"/>
<circle cx="521.500" cy="73" r="5" fill="#62b0f0"/><path d="M516.500,73H526.500M521.500,68V78M518,69.500C520,71 523,71 525,69.500M518,76.500C520,75 523,75 525,76.500" fill="none" stroke="#242932"/>
<use href="#dt" x="545" y="73.500"/>
<line x1="560.500" y1="63" x2="560.500" y2="84" stroke="#4c525e"/>
<line x1="662.500" y1="63" x2="662.500" y2="84" stroke="#4c525e"/>
<g fill="#b6bcc4"><circle cx="226" cy="102" r="1.400"/><circle cx="226" cy="107" r="1.400"/><circle cx="226" cy="112" r="1.400"/></g>

<!-- play -->
<path d="M1102,16L1110,20L1102,24Z" fill="#e0e0e0"/>
<path d="M1126,16h3v8h-3zM1131,16h3v8h-3z" fill="#7c8087"/>
<rect x="1150" y="16" width="8" height="8" fill="#7c8087"/>
<path d="M1173,15h11v8h-4v2h2v1h-7v-1h2v-2h-4z" fill="#7c8087"/><path d="M1177,17l3,2l-3,2z" fill="#262b36"/>
<rect x="1197" y="18" width="11" height="8" fill="#e0e0e0"/><path d="M1197,16L1208,15" stroke="#e0e0e0" stroke-width="2"/><path d="M1201,20l3,2l-3,2z" fill="#262b36"/>
<rect x="1221" y="18" width="11" height="8" fill="#e0e0e0"/><path d="M1221,16L1232,15" stroke="#e0e0e0" stroke-width="2"/><rect x="1223" y="20" width="7" height="4" fill="#262b36"/>
<circle cx="1250" cy="19" r="5" fill="#c8c8c8"/><path d="M1253,22L1256,25" stroke="#e0e0e0" stroke-width="2"/><circle cx="1248" cy="17.500" r="1" fill="#262b36"/><circle cx="1252" cy="19" r="1" fill="#262b36"/><circle cx="1248" cy="21" r="1" fill="#262b36"/>

<!-- bottom right -->
<path d="M1079,679a3,3 0 0 1 4,-2a3,3 0 0 1 3,1l2,-1v7h-2v1h-7v-3z" fill="#6a6f76"/>

<!-- inspector icons -->
<path d="M1161,68H1167L1170,71V80H1161Z" fill="#e0e0e0"/><circle cx="1168" cy="77" r="3" fill="#6fdc85"/>
<path d="M1184,71H1187L1188,69H1193V72H1195L1194,80H1184Z" fill="#dcdcdc"/>
<path d="M1208,69H1217L1219,71V80H1208Z" fill="#8a8e95"/><rect x="1211" y="69" width="5" height="3" fill="#363d4a"/><rect x="1211" y="75" width="5" height="5" fill="#363d4a"/>
<use href="#dt" x="1237" y="73"/>
<path d="M1303,68L1300,73L1303,78" fill="none" stroke="#6a6f76" stroke-width="1.300"/>
<path d="M1318,68L1321,73L1318,78" fill="none" stroke="#6a6f76" stroke-width="1.300"/>
<use href="#oc" x="1164" y="97"/>
<path d="M1316,95L1319,98L1322,95" fill="none" stroke="#e0e0e0" stroke-width="1.500"/>
<use href="#se" x="1316" y="122"/>
<g fill="#e0e0e0"><circle cx="1199" cy="149" r="3.500"/><path d="M1198,143.500h2v11h-2zM1193.500,148h11v2h-11zM1195,145l1.500,-1.500l7,7l-1.500,1.500zM1203,145l-1.500,-1.500l-7,7l1.500,1.500z"/></g><circle cx="1199" cy="149" r="1.300" fill="#3c424d"/>
<use href="#rv" x="1237" y="171"/>
<use href="#rv" x="1237" y="246"/>
<use href="#rv" x="1237" y="271"/>
<circle cx="1261" cy="170" r="4.500" fill="none" stroke="#fc7f7f" stroke-width="2"/>
<g fill="#e0e0e0"><rect x="1327" y="166" width="2" height="2"/><rect x="1327" y="170" width="2" height="2"/><rect x="1327" y="174" width="2" height="2"/></g>
<use href="#rv" x="1330" y="221"/>
<use href="#rv" x="1330" y="296"/>
<use href="#oc" x="1202" y="316"/>
<path d="M1256,410L1258,412L1262,407" fill="none" stroke="#fff" stroke-width="1.500"/>
<circle cx="1209" cy="534" r="3.800" fill="none" stroke="#a5a8ad" stroke-width="1.500"/>
<circle cx="1202" cy="572" r="3.800" fill="none" stroke="#a5a8ad" stroke-width="1.500"/>
<g><use href="#cr" x="1165" y="455"/><use href="#cr" x="1165" y="474"/><use href="#cd" x="1165" y="493"/><use href="#cr" x="1165" y="553"/><use href="#cd" x="1165" y="614"/></g>
<path d="M1254,683L1256.500,685.500L1259,683" fill="none" stroke="#4a5a6e" stroke-width="1.200"/>
<path d="M1327,337h2M1327,593h2" stroke="#cfcfcf"/>
</svg>
</body></html>
